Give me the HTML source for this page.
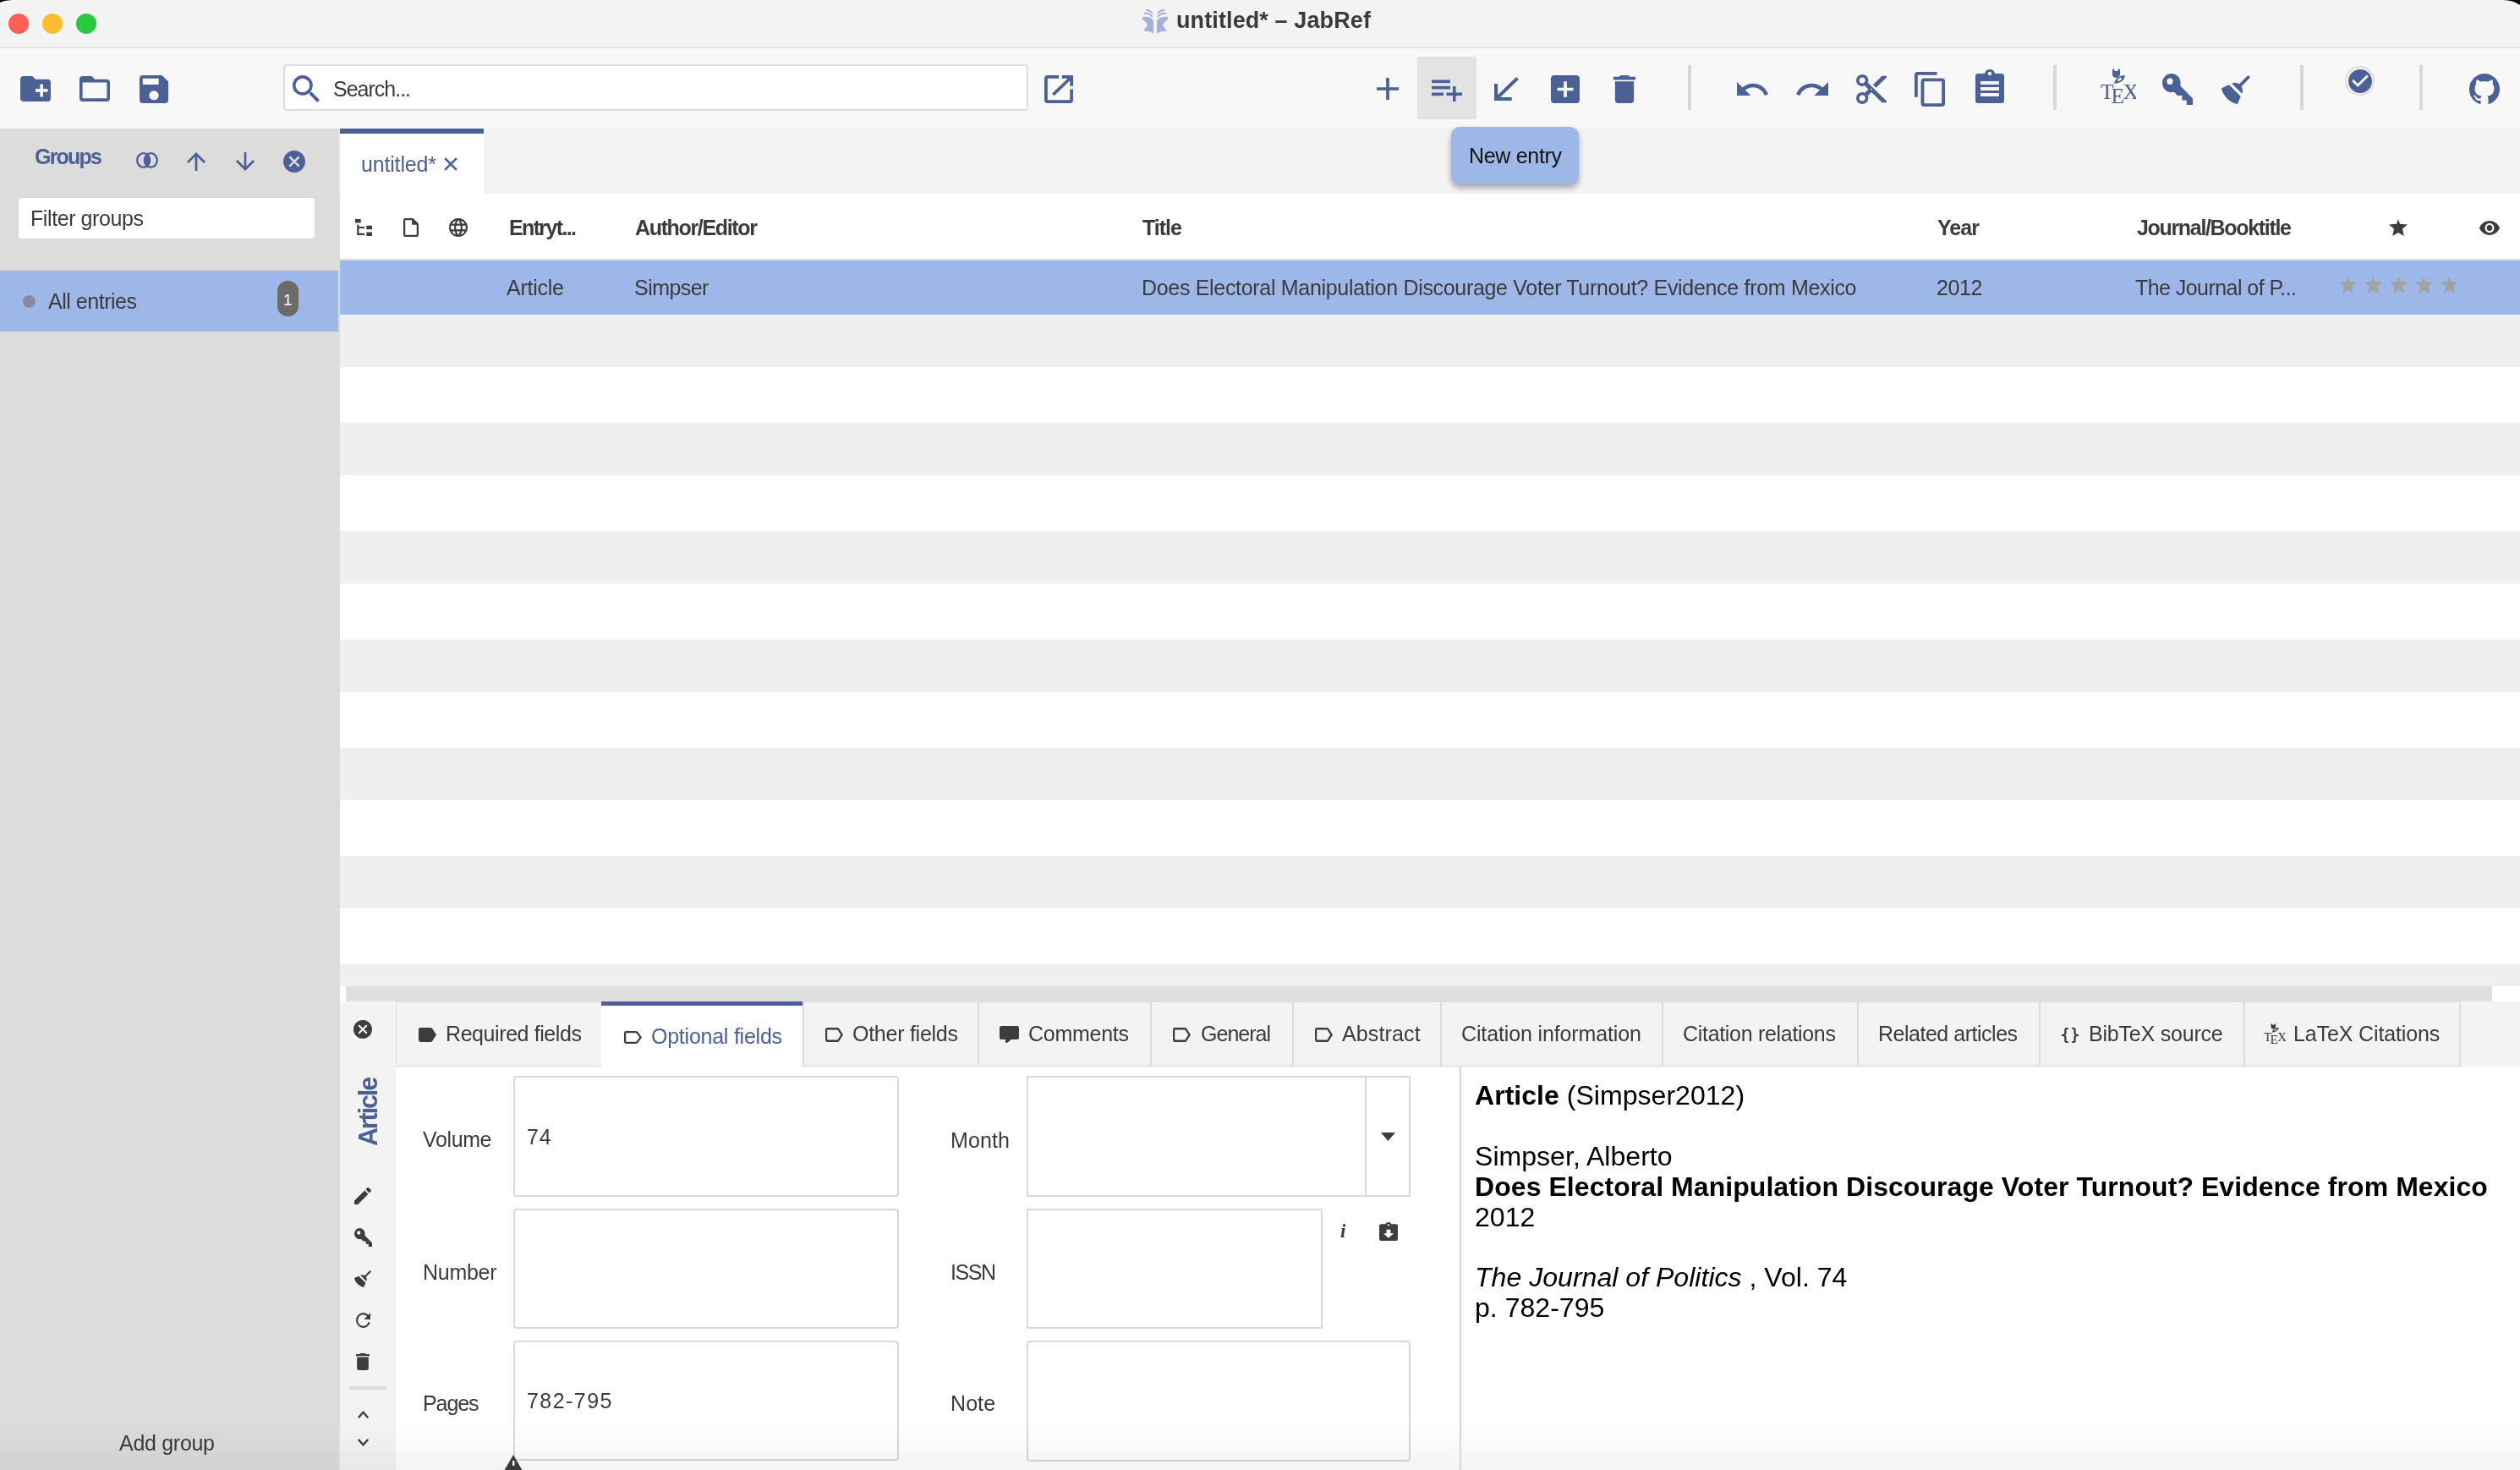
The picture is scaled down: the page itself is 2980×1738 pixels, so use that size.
<!DOCTYPE html>
<html><head><meta charset="utf-8"><style>
html,body{margin:0;padding:0;}
body{width:2980px;height:1738px;position:relative;overflow:hidden;background:#fff;font-family:"Liberation Sans",sans-serif;}
body>div,body>svg{position:absolute;box-sizing:content-box;}
.t{white-space:nowrap;line-height:1;will-change:transform;}
</style></head><body>
<div style="left:0px;top:0px;width:2980px;height:56px;background:#f3f3f3;"></div>
<div style="left:0px;top:56px;width:2980px;height:1px;background:#d9d9d9;"></div>
<div style="left:10px;top:16px;width:24px;height:24px;border-radius:50%;background:#fe5f57"></div>
<div style="left:50px;top:16px;width:24px;height:24px;border-radius:50%;background:#febc2e"></div>
<div style="left:90px;top:16px;width:24px;height:24px;border-radius:50%;background:#28c840"></div>
<svg style="left:1350px;top:10px;width:32px;height:31px;" viewBox="0 0 32 31" preserveAspectRatio="none"><g fill="#a3b3d8"><path d="M1 10 Q9 9 14 14 L14 30 Q10 26 2 27 L7 20 Q5 15 1 13 Z"/><path d="M31 10 Q23 9 18 14 L18 30 Q22 26 30 27 L25 20 Q27 15 31 13 Z"/></g><g fill="none" stroke="#a3b3d8" stroke-width="2"><path d="M3 6 Q9 5 13 10 M5 2 Q10 2 13 6 M29 6 Q23 5 19 10 M27 2 Q22 2 19 6"/></g></svg>
<div class="t" style="left:1391.0px;top:11.14px;font-size:27px;color:#3a3a3a;font-weight:bold;letter-spacing:0.11px;font-style:normal;">untitled* – JabRef</div>
<div style="left:0px;top:57px;width:2980px;height:95px;background:#f8f8f8;"></div>
<svg style="left:24px;top:90px;width:36px;height:30px;" viewBox="2 4 20 16" preserveAspectRatio="none"><path d="M10,4L12,6H20A2,2 0 0,1 22,8V18A2,2 0 0,1 20,20H4C2.89,20 2,19.1 2,18V6C2,4.89 2.89,4 4,4H10M15,9V12H12V14H15V17H17V14H20V12H17V9H15Z" fill="#4b6095"/></svg>
<svg style="left:94px;top:90px;width:36px;height:30px;" viewBox="2 4 20 16" preserveAspectRatio="none"><path d="M20,18H4V8H20M20,6H12L10,4H4C2.89,4 2,4.89 2,6V18A2,2 0 0,0 4,20H20A2,2 0 0,0 22,18V8C22,6.89 21.1,6 20,6Z" fill="#4b6095"/></svg>
<svg style="left:165px;top:89px;width:34px;height:33px;" viewBox="3 3 18 18" preserveAspectRatio="none"><path d="M15,9H5V5H15M12,19A3,3 0 0,1 9,16A3,3 0 0,1 12,13A3,3 0 0,1 15,16A3,3 0 0,1 12,19M17,3H5C3.89,3 3,3.9 3,5V19A2,2 0 0,0 5,21H19A2,2 0 0,0 21,19V7L17,3Z" fill="#4b6095"/></svg>
<div style="left:335px;top:76px;width:877px;height:51px;background:#fff;border:2px solid #dcdcdc;border-radius:4px"></div>
<svg style="left:346px;top:89px;width:32px;height:32px;" viewBox="3 3 17.5 17.5" preserveAspectRatio="none"><path d="M9.5,3A6.5,6.5 0 0,1 16,9.5C16,11.11 15.41,12.59 14.44,13.73L14.71,14H15.5L20.5,19L19,20.5L14,15.5V14.71L13.73,14.44C12.59,15.41 11.11,16 9.5,16A6.5,6.5 0 0,1 3,9.5A6.5,6.5 0 0,1 9.5,3M9.5,5C7,5 5,7 5,9.5C5,12 7,14 9.5,14C12,14 14,12 14,9.5C14,7 12,5 9.5,5Z" fill="#4b6095"/></svg>
<div class="t" style="left:394.0px;top:92.84px;font-size:25px;color:#3b3b3b;font-weight:normal;letter-spacing:-1.0px;font-style:normal;">Search...</div>
<svg style="left:1235px;top:89px;width:34px;height:33px;" viewBox="3 3 18 18" preserveAspectRatio="none"><path d="M14,3V5H17.59L7.76,14.83L9.17,16.24L19,6.41V10H21V3M19,19H5V5H12V3H5C3.89,3 3,3.9 3,5V19A2,2 0 0,0 5,21H19A2,2 0 0,0 21,19V12H19V19Z" fill="#4b6095"/></svg>
<svg style="left:1628px;top:92px;width:26px;height:26px;" viewBox="5 5 14 14" preserveAspectRatio="none"><path d="M19,13H13V19H11V13H5V11H11V5H13V11H19V13Z" fill="#4b6095"/></svg>
<div style="left:1676px;top:67px;width:70px;height:74px;background:#e3e3e3;"></div>
<svg style="left:1692px;top:94px;width:38px;height:26px;" viewBox="0 0 38 26" preserveAspectRatio="none"><g fill="#4b6095"><rect x="1" y="0.5" width="22" height="3.6"/><rect x="1" y="7.8" width="22" height="3.6"/><rect x="1" y="15.5" width="14" height="3.6"/><rect x="18.5" y="15.5" width="18.5" height="3.6"/><rect x="26" y="8" width="3.6" height="18"/></g></svg>
<svg style="left:1767px;top:91px;width:29px;height:28px;" viewBox="5 5 14 14" preserveAspectRatio="none"><path d="M19,6.41L17.59,5L7,15.59V9H5V19H15V17H8.41L19,6.41Z" fill="#4b6095"/></svg>
<svg style="left:1834px;top:89px;width:34px;height:33px;" viewBox="3 3 18 18" preserveAspectRatio="none"><path d="M17,13H13V17H11V13H7V11H11V7H13V11H17M19,3H5C3.89,3 3,3.89 3,5V19A2,2 0 0,0 5,21H19A2,2 0 0,0 21,19V5C21,3.89 20.1,3 19,3Z" fill="#4b6095"/></svg>
<svg style="left:1908px;top:89px;width:26px;height:33px;" viewBox="5 3 14 18" preserveAspectRatio="none"><path d="M19,4H15.5L14.5,3H9.5L8.5,4H5V6H19M6,19A2,2 0 0,0 8,21H16A2,2 0 0,0 18,19V7H6V19Z" fill="#4b6095"/></svg>
<div style="left:1996px;top:77px;width:4px;height:53px;background:#d8d8d8;"></div>
<div style="left:2428px;top:77px;width:4px;height:53px;background:#d8d8d8;"></div>
<div style="left:2720px;top:77px;width:4px;height:53px;background:#d8d8d8;"></div>
<div style="left:2861px;top:77px;width:4px;height:53px;background:#d8d8d8;"></div>
<svg style="left:2054px;top:97px;width:37px;height:16px;" viewBox="2 7 20.469999313354492 9" preserveAspectRatio="none"><path d="M12.5,8C9.85,8 7.45,9 5.6,10.6L2,7V16H11L7.38,12.38C8.77,11.22 10.54,10.5 12.5,10.5C16.04,10.5 19.05,12.81 20.1,16L22.47,15.22C21.08,11.03 17.15,8 12.5,8Z" fill="#4b6095"/></svg>
<svg style="left:2124px;top:97px;width:38px;height:16px;" viewBox="1.5399999618530273 7 20.459999084472656 9" preserveAspectRatio="none"><path d="M18.4,10.6C16.55,9 14.15,8 11.5,8C6.85,8 2.92,11.03 1.54,15.22L3.9,16C4.95,12.81 7.95,10.5 11.5,10.5C13.45,10.5 15.23,11.22 16.62,12.38L13,16H22V7L18.4,10.6Z" fill="#4b6095"/></svg>
<svg style="left:2195px;top:88px;width:36px;height:35px;" viewBox="2 2 20 20" preserveAspectRatio="none"><path d="M19,3L13,9L15,11L22,4V3M12,12.5A0.5,0.5 0 0,1 11.5,12A0.5,0.5 0 0,1 12,11.5A0.5,0.5 0 0,1 12.5,12A0.5,0.5 0 0,1 12,12.5M6,20A2,2 0 0,1 4,18C4,16.89 4.9,16 6,16A2,2 0 0,1 8,18C8,19.11 7.1,20 6,20M6,8A2,2 0 0,1 4,6C4,4.89 4.9,4 6,4A2,2 0 0,1 8,6C8,7.11 7.1,8 6,8M9.64,7.64C9.87,7.14 10,6.59 10,6A4,4 0 0,0 6,2A4,4 0 0,0 2,6A4,4 0 0,0 6,10C6.59,10 7.14,9.87 7.64,9.64L10,12L7.64,14.36C7.14,14.13 6.59,14 6,14A4,4 0 0,0 2,18A4,4 0 0,0 6,22A4,4 0 0,0 10,18C10,17.41 9.87,16.86 9.64,16.36L12,14L19,21H22V20L9.64,7.64Z" fill="#4b6095"/></svg>
<svg style="left:2264px;top:85px;width:36px;height:41px;" viewBox="2 1 19 22" preserveAspectRatio="none"><path d="M19,21H8V7H19M19,5H8A2,2 0 0,0 6,7V21A2,2 0 0,0 8,23H19A2,2 0 0,0 21,21V7A2,2 0 0,0 19,5M16,1H4A2,2 0 0,0 2,3V17H4V3H16V1Z" fill="#4b6095"/></svg>
<svg style="left:2336px;top:82px;width:34px;height:40px;" viewBox="0 0 34 40" preserveAspectRatio="none"><path d="M3 5 H11 Q12 0 17 0 Q22 0 23 5 H31 Q34 5 34 8 V37 Q34 40 31 40 H3 Q0 40 0 37 V8 Q0 5 3 5 Z" fill="#4b6095"/><circle cx="17" cy="5" r="2.2" fill="#f6f6f6"/><g fill="#f6f6f6"><rect x="6" y="14" width="22" height="4"/><rect x="6" y="21" width="22" height="4"/><rect x="6" y="28" width="22" height="4"/></g></svg>
<svg style="left:2484px;top:81px;width:42px;height:41px;" viewBox="0 0 42 41" preserveAspectRatio="none"><g font-family="Liberation Serif" font-size="25" fill="#4b6095"><text x="0" y="35.7">T</text><text x="12.5" y="40.7">E</text><text x="26.5" y="35.7">X</text></g><path d="M14 1.5 L15.5 0 L16.8 3 L20.2 3 L21.5 0 L23 1.5 L23 7 Q22.5 10.5 18.5 11 Q14 10.5 14 7 Z" fill="#4b6095"/><path d="M16 18 Q18 8.5 29 8 Q28.5 16.5 16 18 Z" fill="#4b6095"/><ellipse cx="22.5" cy="12.8" rx="2.8" ry="1.4" transform="rotate(-35 22.5 12.8)" fill="#f8f8f8"/></svg>
<svg style="left:2557px;top:87px;width:36px;height:37px;" viewBox="2 2 20 20" preserveAspectRatio="none"><path d="M22,18V22H18V19H15V16H12L9.74,13.74C9.19,13.91 8.61,14 8,14A6,6 0 0,1 2,8A6,6 0 0,1 8,2A6,6 0 0,1 14,8C14,8.61 13.91,9.19 13.74,9.74L22,18M7,5A2,2 0 0,0 5,7A2,2 0 0,0 7,9A2,2 0 0,0 9,7A2,2 0 0,0 7,5Z" fill="#4b6095"/></svg>
<svg style="left:2627px;top:89px;width:34px;height:34px;" viewBox="2.3499999046325684 2.7200000286102295 18.43000030517578 18.43000030517578" preserveAspectRatio="none"><path d="M19.36,2.72L20.78,4.14L15.06,9.85C16.13,11.39 16.28,13.24 15.38,14.44L9.06,8.12C10.26,7.22 12.11,7.37 13.65,8.44L19.36,2.72M5.93,17.57C3.92,15.56 2.69,13.16 2.35,10.92L7.23,8.83L14.67,16.27L12.58,21.15C10.34,20.81 7.94,19.58 5.93,17.57Z" fill="#4b6095"/></svg>
<div style="left:2773px;top:78px;width:31px;height:31px;border-radius:50%;border:2px solid #dcdcdc"></div>
<svg style="left:2777px;top:82px;width:28px;height:28px;" viewBox="2 2 20 20" preserveAspectRatio="none"><path d="M12 2C6.5 2 2 6.5 2 12S6.5 22 12 22 22 17.5 22 12 17.5 2 12 2M10 17L5 12L6.41 10.59L10 14.17L17.59 6.58L19 8L10 17Z" fill="#4b6095"/></svg>
<svg style="left:2920px;top:87px;width:36px;height:36px;" viewBox="2 2 20 19.55240821838379" preserveAspectRatio="none"><path d="M12,2A10,10 0 0,0 2,12C2,16.42 4.87,20.17 8.84,21.5C9.34,21.58 9.5,21.27 9.5,21C9.5,20.77 9.5,20.14 9.5,19.31C6.73,19.91 6.14,17.97 6.14,17.97C5.68,16.81 5.03,16.5 5.03,16.5C4.12,15.88 5.1,15.9 5.1,15.9C6.1,15.97 6.63,16.93 6.63,16.93C7.5,18.45 8.97,18 9.54,17.76C9.63,17.11 9.89,16.67 10.17,16.42C7.95,16.17 5.64,15.31 5.64,11.5C5.64,10.39 6,9.5 6.65,8.79C6.55,8.54 6.2,7.5 6.75,6.15C6.75,6.15 7.59,5.88 9.5,7.17C10.29,6.95 11.15,6.84 12,6.84C12.85,6.84 13.71,6.95 14.5,7.17C16.41,5.88 17.25,6.15 17.25,6.15C17.8,7.5 17.45,8.54 17.35,8.79C18,9.5 18.36,10.39 18.36,11.5C18.36,15.32 16.04,16.16 13.81,16.41C14.17,16.72 14.5,17.33 14.5,18.26C14.5,19.6 14.5,20.68 14.5,21.09C14.5,21.36 14.66,21.68 15.17,21.5C19.14,20.16 22,16.42 22,12A10,10 0 0,0 12,2Z" fill="#4b6095"/></svg>
<div style="left:0px;top:152px;width:400px;height:1586px;background:#dcdcdc;"></div>
<div style="left:400px;top:152px;width:2px;height:77px;background:#e4e4e1;"></div>
<div style="left:400px;top:229px;width:2px;height:1509px;background:#dcdcdc;"></div>
<div class="t" style="left:41.0px;top:172.84px;font-size:25px;color:#4b6095;font-weight:bold;letter-spacing:-1.775px;font-style:normal;">Groups</div>
<svg style="left:161px;top:180px;width:26px;height:19px;" viewBox="0 0 26 19" preserveAspectRatio="none"><g fill="none" stroke="#4b6095" stroke-width="2.3"><ellipse cx="8.7" cy="9.5" rx="7.5" ry="8.3"/><ellipse cx="17.3" cy="9.5" rx="7.5" ry="8.3"/></g><path d="M13 2.6 Q17.8 9.5 13 16.4 Q8.2 9.5 13 2.6Z" fill="#4b6095"/></svg>
<svg style="left:221px;top:180px;width:22px;height:22px;" viewBox="4.079999923706055 4.159999847412109 15.84000015258789 15.84000015258789" preserveAspectRatio="none"><path d="M13,20H11V8L5.5,13.5L4.08,12.08L12,4.16L19.92,12.08L18.5,13.5L13,8V20Z" fill="#4b6095"/></svg>
<svg style="left:279px;top:180px;width:22px;height:22px;" viewBox="4.079999923706055 4 15.84000015258789 15.84000015258789" preserveAspectRatio="none"><path d="M11,4H13V16L18.5,10.5L19.92,11.92L12,19.84L4.08,11.92L5.5,10.5L11,16V4Z" fill="#4b6095"/></svg>
<svg style="left:335px;top:178px;width:26px;height:26px;" viewBox="2 2 20 20" preserveAspectRatio="none"><path d="M12,2C17.53,2 22,6.47 22,12C22,17.53 17.53,22 12,22C6.47,22 2,17.53 2,12C2,6.47 6.47,2 12,2M15.59,7L12,10.59L8.41,7L7,8.41L10.59,12L7,15.59L8.41,17L12,13.41L15.59,17L17,15.59L13.41,12L17,8.41L15.59,7Z" fill="#4b6095"/></svg>
<div style="left:22px;top:234px;width:350px;height:48px;background:#fff;border-radius:4px"></div>
<div class="t" style="left:36.0px;top:245.84px;font-size:25px;color:#3b3b3b;font-weight:normal;letter-spacing:-0.417px;font-style:normal;">Filter groups</div>
<div style="left:0px;top:320px;width:400px;height:72px;background:#9db7e8;"></div>
<div style="left:27px;top:349px;width:15px;height:15px;border-radius:50%;background:#858c9c"></div>
<div class="t" style="left:57.0px;top:343.84px;font-size:25px;color:#3b3b3b;font-weight:normal;letter-spacing:-0.475px;font-style:normal;">All entries</div>
<div style="left:328px;top:332px;width:25px;height:42px;border-radius:12px;background:#6b6b6b"></div>
<div class="t" style="left:335px;top:344.92px;font-size:19px;color:#fff;font-weight:normal;letter-spacing:0px;font-style:normal;">1</div>
<div style="left:0px;top:1674px;width:400px;height:64px;background:linear-gradient(#dcdcdc,#d2d2d2)"></div>
<div class="t" style="left:141.0px;top:1693.84px;font-size:25px;color:#3b3b3b;font-weight:normal;letter-spacing:-0.297px;font-style:normal;">Add group</div>
<div style="left:402px;top:152px;width:2578px;height:77px;background:#f3f3f3;"></div>
<div style="left:402px;top:158px;width:170px;height:71px;background:#ffffff;"></div>
<div style="left:402px;top:152px;width:170px;height:6px;background:#4b6095;"></div>
<div class="t" style="left:427.0px;top:181.84px;font-size:25px;color:#4b6095;font-weight:normal;letter-spacing:-0.172px;font-style:normal;">untitled*</div>
<svg style="left:525px;top:186px;width:16px;height:16px;" viewBox="0 0 14 14" preserveAspectRatio="none"><path d="M1 1 L13 13 M13 1 L1 13" stroke="#4b6095" stroke-width="2.4"/></svg>
<div style="left:402px;top:229px;width:2578px;height:77px;background:#ffffff;"></div>
<div style="left:402px;top:306px;width:2578px;height:2px;background:#dadada;"></div>
<div style="left:402px;top:308px;width:2578px;height:64px;background:#9db7e8;"></div>
<div style="left:402px;top:372px;width:2578px;height:62px;background:#efefef;"></div>
<div style="left:402px;top:436px;width:2578px;height:64px;background:#ffffff;"></div>
<div style="left:402px;top:500px;width:2578px;height:62px;background:#efefef;"></div>
<div style="left:402px;top:564px;width:2578px;height:64px;background:#ffffff;"></div>
<div style="left:402px;top:628px;width:2578px;height:62px;background:#efefef;"></div>
<div style="left:402px;top:692px;width:2578px;height:64px;background:#ffffff;"></div>
<div style="left:402px;top:756px;width:2578px;height:62px;background:#efefef;"></div>
<div style="left:402px;top:820px;width:2578px;height:64px;background:#ffffff;"></div>
<div style="left:402px;top:884px;width:2578px;height:62px;background:#efefef;"></div>
<div style="left:402px;top:948px;width:2578px;height:64px;background:#ffffff;"></div>
<div style="left:402px;top:1012px;width:2578px;height:62px;background:#efefef;"></div>
<div style="left:402px;top:1076px;width:2578px;height:64px;background:#ffffff;"></div>
<div style="left:402px;top:1140px;width:2578px;height:26px;background:#efefef;"></div>
<svg style="left:420px;top:259px;width:20px;height:20px;" viewBox="3 3 18 18" preserveAspectRatio="none"><path d="M3,3H9V7H3V3M15,10H21V14H15V10M15,17H21V21H15V17M13,13H7V18H13V20H7L5,20V9H7V11H13V13Z" fill="#3d3d3d"/></svg>
<svg style="left:477px;top:258px;width:18px;height:22px;" viewBox="4 2 16 20" preserveAspectRatio="none"><path d="M14,2H6A2,2 0 0,0 4,4V20A2,2 0 0,0 6,22H18A2,2 0 0,0 20,20V8L14,2M18,20H6V4H13V9H18V20Z" fill="#3d3d3d"/></svg>
<svg style="left:531px;top:258px;width:22px;height:22px;" viewBox="2 2 20 20" preserveAspectRatio="none"><path d="M16.36,14C16.44,13.34 16.5,12.68 16.5,12C16.5,11.32 16.44,10.66 16.36,10H19.74C19.9,10.64 20,11.31 20,12C20,12.69 19.9,13.36 19.74,14M14.59,19.56C15.19,18.45 15.65,17.25 15.97,16H18.92C17.96,17.65 16.43,18.93 14.59,19.56M14.34,14H9.66C9.56,13.34 9.5,12.68 9.5,12C9.5,11.32 9.56,10.65 9.66,10H14.34C14.43,10.65 14.5,11.32 14.5,12C14.5,12.68 14.43,13.34 14.34,14M12,19.96C11.17,18.760 10.5,17.43 10.09,16H13.91C13.5,17.43 12.83,18.76 12,19.96M8,8H5.08C6.03,6.34 7.57,5.06 9.4,4.44C8.8,5.55 8.35,6.75 8,8M5.08,16H8C8.35,17.25 8.8,18.45 9.4,19.56C7.57,18.93 6.03,17.65 5.08,16M4.26,14C4.1,13.36 4,12.69 4,12C4,11.31 4.1,10.64 4.26,10H7.64C7.56,10.66 7.5,11.32 7.5,12C7.5,12.68 7.56,13.34 7.64,14M12,4.03C12.83,5.23 13.5,6.57 13.91,8H10.09C10.5,6.57 11.17,5.23 12,4.03M18.92,8H15.97C15.65,6.75 15.19,5.55 14.59,4.44C16.43,5.07 17.96,6.34 18.92,8M12,2C6.47,2 2,6.5 2,12A10,10 0 0,0 12,22A10,10 0 0,0 22,12A10,10 0 0,0 12,2Z" fill="#3d3d3d"/></svg>
<div class="t" style="left:602.0px;top:256.84px;font-size:25px;color:#3b3b3b;font-weight:bold;letter-spacing:-1.641px;font-style:normal;">Entryt...</div>
<div class="t" style="left:751.0px;top:256.84px;font-size:25px;color:#3b3b3b;font-weight:bold;letter-spacing:-1.344px;font-style:normal;">Author/Editor</div>
<div class="t" style="left:1351.0px;top:256.84px;font-size:25px;color:#3b3b3b;font-weight:bold;letter-spacing:-1.0px;font-style:normal;">Title</div>
<div class="t" style="left:2291.0px;top:256.84px;font-size:25px;color:#3b3b3b;font-weight:bold;letter-spacing:-0.958px;font-style:normal;">Year</div>
<div class="t" style="left:2527.0px;top:256.84px;font-size:25px;color:#3b3b3b;font-weight:bold;letter-spacing:-1.328px;font-style:normal;">Journal/Booktitle</div>
<svg style="left:2825px;top:259px;width:22px;height:20px;" viewBox="2 2 20 19" preserveAspectRatio="none"><path d="M12,17.27L18.18,21L16.54,12.97L22,8.26L13.81,7.5L12,2L10.19,7.5L2,8.26L7.45,12.97L5.82,21L12,17.27Z" fill="#3d3d3d"/></svg>
<svg style="left:2932px;top:261px;width:24px;height:17px;" viewBox="1 4.5 22 15" preserveAspectRatio="none"><path d="M12,9A3,3 0 0,0 9,12A3,3 0 0,0 12,15A3,3 0 0,0 15,12A3,3 0 0,0 12,9M12,17A5,5 0 0,1 7,12A5,5 0 0,1 12,7A5,5 0 0,1 17,12A5,5 0 0,1 12,17M12,4.5C7,4.5 2.73,7.61 1,12C2.73,16.39 7,19.5 12,19.5C17,19.5 21.27,16.39 23,12C21.27,7.61 17,4.5 12,4.5Z" fill="#3d3d3d"/></svg>
<div class="t" style="left:599.0px;top:327.84px;font-size:25px;color:#3b3b3b;font-weight:normal;letter-spacing:-0.25px;font-style:normal;">Article</div>
<div class="t" style="left:749.5px;top:327.84px;font-size:25px;color:#3b3b3b;font-weight:normal;letter-spacing:-0.542px;font-style:normal;">Simpser</div>
<div class="t" style="left:1349.5px;top:327.84px;font-size:25px;color:#3b3b3b;font-weight:normal;letter-spacing:-0.315px;font-style:normal;">Does Electoral Manipulation Discourage Voter Turnout? Evidence from Mexico</div>
<div class="t" style="left:2289.5px;top:327.84px;font-size:25px;color:#3b3b3b;font-weight:normal;letter-spacing:-0.375px;font-style:normal;">2012</div>
<div class="t" style="left:2525.0px;top:327.84px;font-size:25px;color:#3b3b3b;font-weight:normal;letter-spacing:-0.556px;font-style:normal;">The Journal of P...</div>
<svg style="left:2766px;top:327px;width:21px;height:20px;" viewBox="2 2 20 19" preserveAspectRatio="none"><path d="M12,17.27L18.18,21L16.54,12.97L22,8.26L13.81,7.5L12,2L10.19,7.5L2,8.26L7.45,12.97L5.82,21L12,17.27Z" fill="#a2a2a2"/></svg>
<svg style="left:2796px;top:327px;width:21px;height:20px;" viewBox="2 2 20 19" preserveAspectRatio="none"><path d="M12,17.27L18.18,21L16.54,12.97L22,8.26L13.81,7.5L12,2L10.19,7.5L2,8.26L7.45,12.97L5.82,21L12,17.27Z" fill="#a2a2a2"/></svg>
<svg style="left:2826px;top:327px;width:21px;height:20px;" viewBox="2 2 20 19" preserveAspectRatio="none"><path d="M12,17.27L18.18,21L16.54,12.97L22,8.26L13.81,7.5L12,2L10.19,7.5L2,8.26L7.45,12.97L5.82,21L12,17.27Z" fill="#a2a2a2"/></svg>
<svg style="left:2856px;top:327px;width:21px;height:20px;" viewBox="2 2 20 19" preserveAspectRatio="none"><path d="M12,17.27L18.18,21L16.54,12.97L22,8.26L13.81,7.5L12,2L10.19,7.5L2,8.26L7.45,12.97L5.82,21L12,17.27Z" fill="#a2a2a2"/></svg>
<svg style="left:2886px;top:327px;width:21px;height:20px;" viewBox="2 2 20 19" preserveAspectRatio="none"><path d="M12,17.27L18.18,21L16.54,12.97L22,8.26L13.81,7.5L12,2L10.19,7.5L2,8.26L7.45,12.97L5.82,21L12,17.27Z" fill="#a2a2a2"/></svg>
<div style="left:402px;top:1166px;width:2578px;height:18px;background:#ffffff;"></div>
<div style="left:409px;top:1166px;width:2538px;height:18px;background:#e0e0e0;"></div>
<div style="left:1716px;top:150px;width:151px;height:68px;border-radius:10px;background:#9db7e8;box-shadow:0 4px 7px rgba(0,0,0,0.33)"></div>
<div class="t" style="left:1737.0px;top:171.84px;font-size:25px;color:#111;font-weight:normal;letter-spacing:-0.312px;font-style:normal;">New entry</div>
<div style="left:402px;top:1184px;width:2578px;height:554px;background:#ffffff;"></div>
<div style="left:402px;top:1184px;width:66px;height:554px;background:#f3f3f3;"></div>
<div style="left:468px;top:1184px;width:2512px;height:77px;background:#f3f3f3;"></div>
<div style="left:468px;top:1260px;width:2440px;height:1px;background:#d4d4d4;"></div>
<div style="left:468px;top:1184px;width:2440px;height:1px;background:#dcdcdc;"></div>
<svg style="left:418px;top:1206px;width:22px;height:22px;" viewBox="2 2 20 20" preserveAspectRatio="none"><path d="M12,2C17.53,2 22,6.47 22,12C22,17.53 17.53,22 12,22C6.47,22 2,17.53 2,12C2,6.47 6.47,2 12,2M15.59,7L12,10.59L8.41,7L7,8.41L10.59,12L7,15.59L8.41,17L12,13.41L15.59,17L17,15.59L13.41,12L17,8.41L15.59,7Z" fill="#3d3d3d"/></svg>
<div class="t" style="left:385px;top:1298px;width:100px;height:32px;font-size:30.5px;font-weight:bold;color:#4b6095;transform:rotate(-90deg);text-align:center;letter-spacing:-2.1px;line-height:32px;text-indent:-2px">Article</div>
<svg style="left:419px;top:1404px;width:20px;height:20px;" viewBox="3 2.997499942779541 18.002500534057617 18.002500534057617" preserveAspectRatio="none"><path d="M20.71,7.04C21.1,6.65 21.1,6 20.71,5.63L18.37,3.29C18,2.9 17.35,2.9 16.96,3.29L15.12,5.12L18.87,8.87M3,17.25V21H6.75L17.810,9.93L14.06,6.18L3,17.25Z" fill="#3d3d3d"/></svg>
<svg style="left:419px;top:1452px;width:21px;height:22px;" viewBox="2 2 20 20" preserveAspectRatio="none"><path d="M22,18V22H18V19H15V16H12L9.74,13.74C9.19,13.91 8.61,14 8,14A6,6 0 0,1 2,8A6,6 0 0,1 8,2A6,6 0 0,1 14,8C14,8.61 13.91,9.19 13.74,9.74L22,18M7,5A2,2 0 0,0 5,7A2,2 0 0,0 7,9A2,2 0 0,0 9,7A2,2 0 0,0 7,5Z" fill="#3d3d3d"/></svg>
<svg style="left:419px;top:1502px;width:20px;height:20px;" viewBox="2.3499999046325684 2.7200000286102295 18.43000030517578 18.43000030517578" preserveAspectRatio="none"><path d="M19.36,2.72L20.78,4.14L15.06,9.85C16.13,11.39 16.28,13.24 15.38,14.44L9.06,8.12C10.26,7.22 12.11,7.37 13.65,8.44L19.36,2.72M5.93,17.57C3.92,15.56 2.69,13.16 2.35,10.92L7.23,8.83L14.67,16.27L12.58,21.15C10.34,20.81 7.94,19.58 5.93,17.57Z" fill="#3d3d3d"/></svg>
<svg style="left:421px;top:1552px;width:17px;height:18px;" viewBox="4 4 16 16" preserveAspectRatio="none"><path d="M17.65,6.35C16.2,4.9 14.21,4 12,4A8,8 0 0,0 4,12A8,8 0 0,0 12,20C15.73,20 18.84,17.45 19.73,14H17.65C16.83,16.33 14.61,18 12,18A6,6 0 0,1 6,12A6,6 0 0,1 12,6C13.66,6 15.14,6.69 16.22,7.78L13,11H20V4L17.65,6.35Z" fill="#3d3d3d"/></svg>
<svg style="left:421px;top:1600px;width:16px;height:20px;" viewBox="5 3 14 18" preserveAspectRatio="none"><path d="M19,4H15.5L14.5,3H9.5L8.5,4H5V6H19M6,19A2,2 0 0,0 8,21H16A2,2 0 0,0 18,19V7H6V19Z" fill="#3d3d3d"/></svg>
<div style="left:413px;top:1639px;width:44px;height:4px;background:#dcdcdc;"></div>
<svg style="left:423px;top:1668px;width:13px;height:9px;" viewBox="6 8 12 7.409999847412109" preserveAspectRatio="none"><path d="M7.41,15.41L12,10.83L16.59,15.41L18,14L12,8L6,14L7.41,15.41Z" fill="#3d3d3d"/></svg>
<svg style="left:423px;top:1701px;width:13px;height:9px;" viewBox="6 8.579999923706055 12 7.420000076293945" preserveAspectRatio="none"><path d="M7.41,8.58L12,13.17L16.59,8.58L18,10L12,16L6,10L7.41,8.58Z" fill="#3d3d3d"/></svg>
<div style="left:468px;top:1184px;width:1px;height:77px;background:#dcdcdc;"></div>
<svg style="left:495px;top:1215px;width:21px;height:17px;" viewBox="3 5 19 14" preserveAspectRatio="none"><path d="M17.63,5.84C17.27,5.33 16.67,5 16,5H5A2,2 0 0,0 3,7V17A2,2 0 0,0 5,19H16C16.67,19 17.27,18.66 17.63,18.15L22,12L17.63,5.84Z" fill="#3d3d3d"/></svg>
<div class="t" style="left:527.4px;top:1210.34px;font-size:25px;color:#3b3b3b;font-weight:normal;letter-spacing:-0.418px;font-style:normal;">Required fields</div>
<div style="left:711px;top:1184px;width:238px;height:77px;background:#ffffff;"></div>
<div style="left:711px;top:1184px;width:238px;height:5px;background:#4b6095;"></div>
<svg style="left:738px;top:1219px;width:21px;height:15px;" viewBox="3 5 19 14" preserveAspectRatio="none"><path d="M16,17H5V7H16L19.55,12M17.63,5.84C17.27,5.33 16.67,5 16,5H5A2,2 0 0,0 3,7V17A2,2 0 0,0 5,19H16C16.67,19 17.27,18.66 17.63,18.15L22,12L17.63,5.84Z" fill="#3d3d3d"/></svg>
<div class="t" style="left:770.0px;top:1213.34px;font-size:25px;color:#4b6095;font-weight:normal;letter-spacing:-0.241px;font-style:normal;">Optional fields</div>
<div style="left:949px;top:1184px;width:2px;height:77px;background:#dcdcdc;"></div>
<svg style="left:976px;top:1215px;width:21px;height:17px;" viewBox="3 5 19 14" preserveAspectRatio="none"><path d="M16,17H5V7H16L19.55,12M17.63,5.84C17.27,5.33 16.67,5 16,5H5A2,2 0 0,0 3,7V17A2,2 0 0,0 5,19H16C16.67,19 17.27,18.66 17.63,18.15L22,12L17.63,5.84Z" fill="#3d3d3d"/></svg>
<div class="t" style="left:1008.0px;top:1210.34px;font-size:25px;color:#3b3b3b;font-weight:normal;letter-spacing:-0.261px;font-style:normal;">Other fields</div>
<div style="left:1156px;top:1184px;width:2px;height:77px;background:#dcdcdc;"></div>
<svg style="left:1182px;top:1213px;width:23px;height:20px;" viewBox="2 2 20 20" preserveAspectRatio="none"><path d="M9,22A1,1 0 0,1 8,21V18H4A2,2 0 0,1 2,16V4C2,2.89 2.9,2 4,2H20A2,2 0 0,1 22,4V16A2,2 0 0,1 20,18H13.9L10.2,21.71C10,21.9 9.75,22 9.5,22V22H9Z" fill="#3d3d3d"/></svg>
<div class="t" style="left:1216.0px;top:1210.34px;font-size:25px;color:#3b3b3b;font-weight:normal;letter-spacing:-0.268px;font-style:normal;">Comments</div>
<div style="left:1360px;top:1184px;width:2px;height:77px;background:#dcdcdc;"></div>
<svg style="left:1387px;top:1215px;width:21px;height:17px;" viewBox="3 5 19 14" preserveAspectRatio="none"><path d="M16,17H5V7H16L19.55,12M17.63,5.84C17.27,5.33 16.67,5 16,5H5A2,2 0 0,0 3,7V17A2,2 0 0,0 5,19H16C16.67,19 17.27,18.66 17.63,18.15L22,12L17.63,5.84Z" fill="#3d3d3d"/></svg>
<div class="t" style="left:1419.5px;top:1210.34px;font-size:25px;color:#3b3b3b;font-weight:normal;letter-spacing:-0.983px;font-style:normal;">General</div>
<div style="left:1528px;top:1184px;width:2px;height:77px;background:#dcdcdc;"></div>
<svg style="left:1555px;top:1215px;width:21px;height:17px;" viewBox="3 5 19 14" preserveAspectRatio="none"><path d="M16,17H5V7H16L19.55,12M17.63,5.84C17.27,5.33 16.67,5 16,5H5A2,2 0 0,0 3,7V17A2,2 0 0,0 5,19H16C16.67,19 17.27,18.66 17.63,18.15L22,12L17.63,5.84Z" fill="#3d3d3d"/></svg>
<div class="t" style="left:1586.6px;top:1210.34px;font-size:25px;color:#3b3b3b;font-weight:normal;letter-spacing:0.136px;font-style:normal;">Abstract</div>
<div style="left:1703px;top:1184px;width:2px;height:77px;background:#dcdcdc;"></div>
<div class="t" style="left:1728.0px;top:1210.34px;font-size:25px;color:#3b3b3b;font-weight:normal;letter-spacing:-0.136px;font-style:normal;">Citation information</div>
<div style="left:1965px;top:1184px;width:2px;height:77px;background:#dcdcdc;"></div>
<div class="t" style="left:1990.0px;top:1210.34px;font-size:25px;color:#3b3b3b;font-weight:normal;letter-spacing:-0.309px;font-style:normal;">Citation relations</div>
<div style="left:2196px;top:1184px;width:2px;height:77px;background:#dcdcdc;"></div>
<div class="t" style="left:2221.0px;top:1210.34px;font-size:25px;color:#3b3b3b;font-weight:normal;letter-spacing:-0.483px;font-style:normal;">Related articles</div>
<div style="left:2411px;top:1184px;width:2px;height:77px;background:#dcdcdc;"></div>
<svg style="left:2438px;top:1215px;width:20px;height:18px;" viewBox="3 3 18 18" preserveAspectRatio="none"><path d="M8,3A2,2 0 0,0 6,5V9A2,2 0 0,1 4,11H3V13H4A2,2 0 0,1 6,15V19A2,2 0 0,0 8,21H10V19H8V14A2,2 0 0,0 6,12A2,2 0 0,0 8,10V5H10V3M16,3A2,2 0 0,1 18,5V9A2,2 0 0,0 20,11H21V13H20A2,2 0 0,0 18,15V19A2,2 0 0,1 16,21H14V19H16V14A2,2 0 0,1 18,12A2,2 0 0,1 16,10V5H14V3H16Z" fill="#3d3d3d"/></svg>
<div class="t" style="left:2470.0px;top:1210.34px;font-size:25px;color:#3b3b3b;font-weight:normal;letter-spacing:-0.204px;font-style:normal;">BibTeX source</div>
<div style="left:2653px;top:1184px;width:2px;height:77px;background:#dcdcdc;"></div>
<svg style="left:2677px;top:1210px;width:25.5px;height:24.5px;" viewBox="0 0 42 41" preserveAspectRatio="none"><g font-family="Liberation Serif" font-size="25" fill="#3d3d3d"><text x="0" y="35.7">T</text><text x="12.5" y="40.7">E</text><text x="26.5" y="35.7">X</text></g><path d="M14 1.5 L15.5 0 L16.8 3 L20.2 3 L21.5 0 L23 1.5 L23 7 Q22.5 10.5 18.5 11 Q14 10.5 14 7 Z" fill="#3d3d3d"/><path d="M16 18 Q18 8.5 29 8 Q28.5 16.5 16 18 Z" fill="#3d3d3d"/><ellipse cx="22.5" cy="12.8" rx="2.8" ry="1.4" transform="rotate(-35 22.5 12.8)" fill="#f3f3f3"/></svg>
<div class="t" style="left:2712.0px;top:1210.34px;font-size:25px;color:#3b3b3b;font-weight:normal;letter-spacing:-0.13px;font-style:normal;">LaTeX Citations</div>
<div style="left:949px;top:1184px;width:2px;height:77px;background:#dddddd;"></div>
<div style="left:2908px;top:1184px;width:2px;height:77px;background:#dddddd;"></div>
<div class="t" style="left:499.5px;top:1334.84px;font-size:25px;color:#3b3b3b;font-weight:normal;letter-spacing:-0.375px;font-style:normal;">Volume</div>
<div style="left:607px;top:1272px;width:452px;height:139px;background:#fff;border:2px solid #d9d9d9;border-radius:4px"></div>
<div class="t" style="left:622.5px;top:1331.84px;font-size:25px;color:#3b3b3b;font-weight:normal;letter-spacing:0.75px;font-style:normal;">74</div>
<div class="t" style="left:499.5px;top:1491.84px;font-size:25px;color:#3b3b3b;font-weight:normal;letter-spacing:-0.275px;font-style:normal;">Number</div>
<div style="left:607px;top:1429px;width:452px;height:138px;background:#fff;border:2px solid #d9d9d9;border-radius:4px"></div>
<div class="t" style="left:499.5px;top:1646.84px;font-size:25px;color:#3b3b3b;font-weight:normal;letter-spacing:-1.094px;font-style:normal;">Pages</div>
<div style="left:607px;top:1585px;width:452px;height:138px;background:#fff;border:2px solid #d9d9d9;border-radius:4px"></div>
<div class="t" style="left:622.5px;top:1643.84px;font-size:25px;color:#3b3b3b;font-weight:normal;letter-spacing:1.458px;font-style:normal;">782-795</div>
<div class="t" style="left:1124.0px;top:1335.84px;font-size:25px;color:#3b3b3b;font-weight:normal;letter-spacing:0.125px;font-style:normal;">Month</div>
<div style="left:1214px;top:1272px;width:450px;height:139px;background:#fff;border:2px solid #d9d9d9;border-radius:0px"></div>
<div style="left:1614px;top:1274px;width:2px;height:139px;background:#d9d9d9;"></div>
<svg style="left:1633px;top:1339px;width:17px;height:10px;" viewBox="7 10 10 5" preserveAspectRatio="none"><path d="M7,10L12,15L17,10H7Z" fill="#3d3d3d"/></svg>
<div class="t" style="left:1124.0px;top:1491.84px;font-size:25px;color:#3b3b3b;font-weight:normal;letter-spacing:-1.458px;font-style:normal;">ISSN</div>
<div style="left:1214px;top:1429px;width:346px;height:138px;background:#fff;border:2px solid #d9d9d9;border-radius:0px"></div>
<div class="t" style="left:1585px;top:1444px;font-family:'Liberation Serif',serif;font-style:italic;font-weight:bold;font-size:23px;color:#3d3d3d;line-height:1">i</div>
<svg style="left:1631px;top:1445px;width:22px;height:22px;" viewBox="3 1 18 20" preserveAspectRatio="none"><path d="M19,3A2,2 0 0,1 21,5V19A2,2 0 0,1 19,21H5A2,2 0 0,1 3,19V5A2,2 0 0,1 5,3H9.18C9.6,1.84 10.7,1 12,1C13.3,1 14.4,1.84 14.82,3H19M12,3A1,1 0 0,0 11,4A1,1 0 0,0 12,5A1,1 0 0,0 13,4A1,1 0 0,0 12,3M7,13L12,18L17,13H14V9H10V13H7Z" fill="#3d3d3d"/></svg>
<div class="t" style="left:1124.0px;top:1646.84px;font-size:25px;color:#3b3b3b;font-weight:normal;letter-spacing:0.083px;font-style:normal;">Note</div>
<div style="left:1214px;top:1585px;width:450px;height:139px;background:#fff;border:2px solid #d9d9d9;border-radius:4px"></div>
<svg style="left:596px;top:1720px;width:22px;height:18px;" viewBox="0 0 22 18" preserveAspectRatio="none"><path d="M11 0 L22 19 H0 Z" fill="#3d3d3d"/><rect x="10" y="7" width="2.4" height="6" fill="#fff"/></svg>
<div style="left:402px;top:1680px;width:2578px;height:58px;background:linear-gradient(rgba(0,0,0,0),rgba(0,0,0,0.045))"></div>
<div style="left:1726px;top:1261px;width:2px;height:477px;background:#d6d6d6;"></div>
<div class="t" style="left:1744px;top:1278.83px;font-size:32.1px;color:#000;font-weight:normal;letter-spacing:0px;font-style:normal;"><b>Article</b> (Simpser2012)</div>
<div class="t" style="left:1744px;top:1350.83px;font-size:32.1px;color:#000;font-weight:normal;letter-spacing:0px;font-style:normal;">Simpser, Alberto</div>
<div class="t" style="left:1744.0px;top:1386.91px;font-size:32px;color:#000;font-weight:bold;letter-spacing:0.058px;font-style:normal;">Does Electoral Manipulation Discourage Voter Turnout? Evidence from Mexico</div>
<div class="t" style="left:1744px;top:1422.83px;font-size:32.1px;color:#000;font-weight:normal;letter-spacing:0px;font-style:normal;">2012</div>
<div class="t" style="left:1744px;top:1493.83px;font-size:32.1px;color:#000;font-weight:normal;letter-spacing:0px;font-style:normal;"><i>The Journal of Politics</i> , Vol. 74</div>
<div class="t" style="left:1744px;top:1529.83px;font-size:32.1px;color:#000;font-weight:normal;letter-spacing:0px;font-style:normal;">p. 782-795</div>
<svg style="left:2960px;top:0px;width:20px;height:6px;" viewBox="0 0 20 6" preserveAspectRatio="none"><path d="M0 0 L20 0 L20 6 Q12 0 0 0 Z" fill="#000"/></svg>
<svg style="left:0px;top:0px;width:14px;height:3px;" viewBox="0 0 14 3" preserveAspectRatio="none"><path d="M0 0 L14 0 Q4 0.5 0 3 Z" fill="#000"/></svg>
</body></html>
